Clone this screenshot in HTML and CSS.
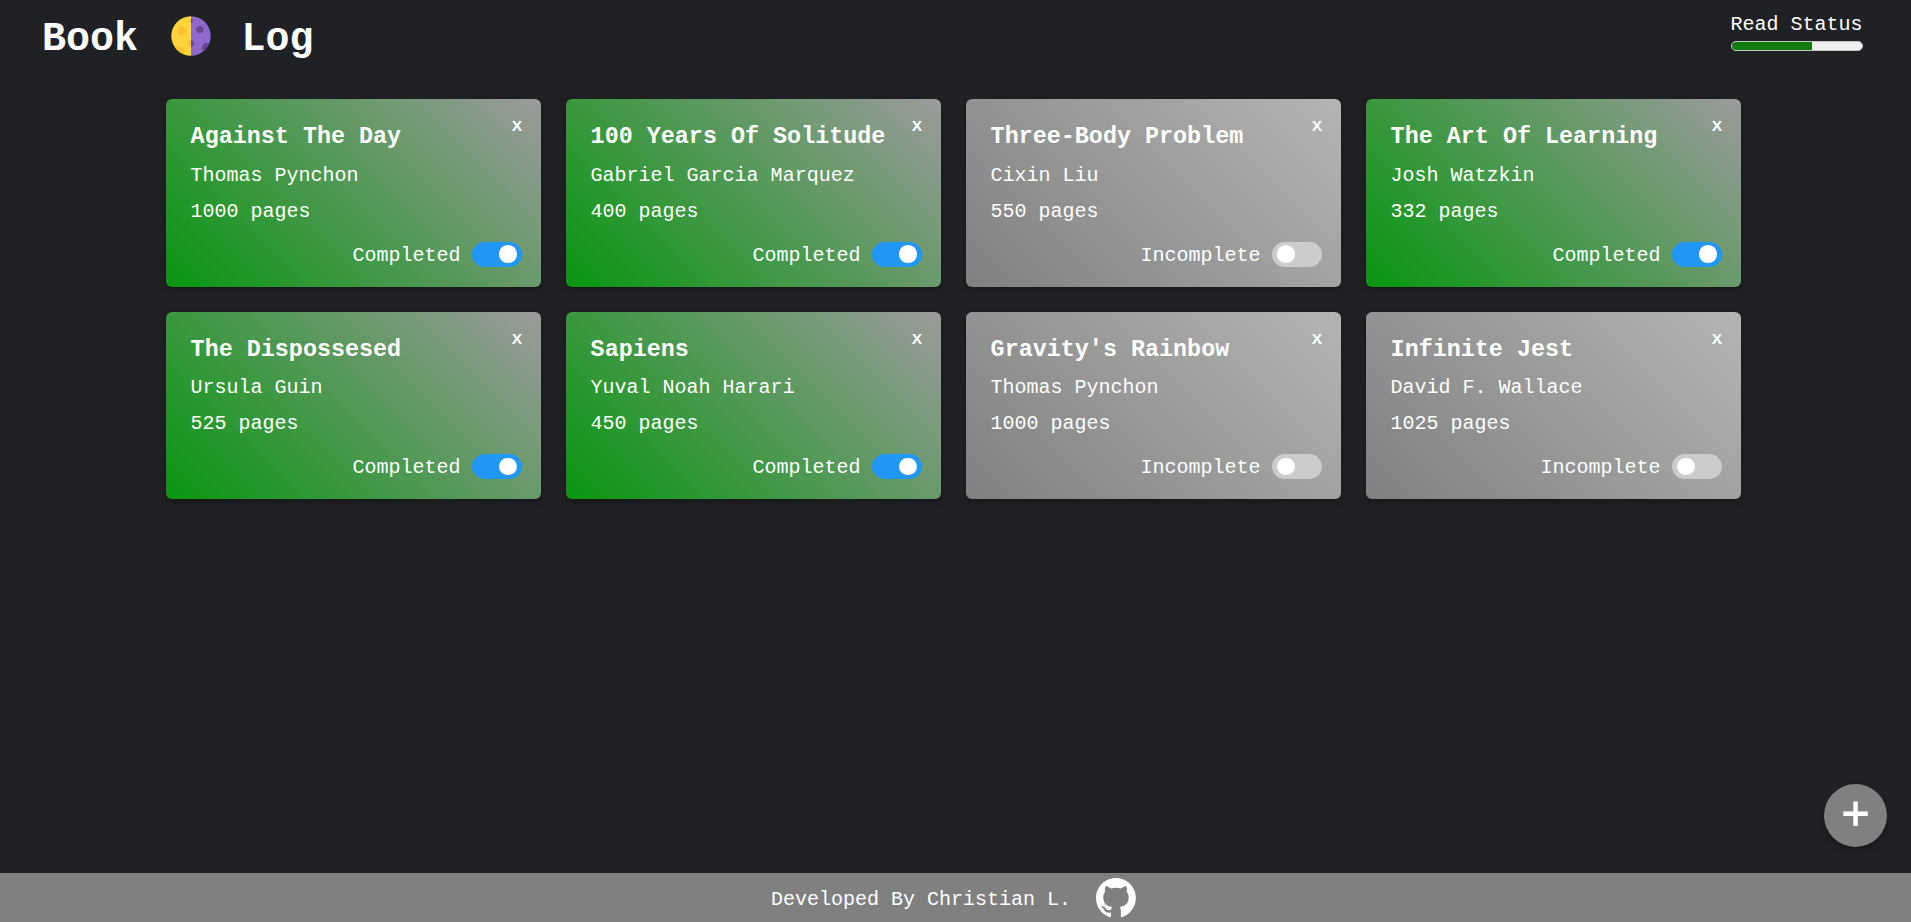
FILE: index.html
```
<!DOCTYPE html>
<html lang="en">
<head>
<meta charset="utf-8">
<title>Book Log</title>
<link rel="stylesheet" href="styles.css">
</head>
<body>
<header class="header">
  <h1 class="logo"><span>Book</span>
    <svg class="moon" viewBox="0 0 40 40">
      <defs><clipPath id="disc"><circle cx="20" cy="20" r="19.7"/></clipPath></defs>
      <g clip-path="url(#disc)">
        <rect width="20" height="40" fill="#ffd43f"/>
        <rect x="20" width="20" height="40" fill="#9268ca"/>
        <circle cx="10.700" cy="15" r="4.800" fill="#fbc034"/>
        <circle cx="8" cy="35" r="5" fill="#fbc034"/>
        <path d="M20 3a2 2 0 0 0 0 4zM20 24a3.500 3.500 0 0 0 0 7z" fill="#fbc034"/>
        <path d="M20 3a2 2 0 0 1 0 4zM20 24a3.600 3.600 0 0 1 0 7z" fill="#6b4390"/>
        <circle cx="28.800" cy="13.500" r="3.600" fill="#6b4390"/>
        <circle cx="36" cy="32" r="5" fill="#6b4390"/>
      </g>
    </svg>
    <span>Log</span></h1>
  <div class="status"><span>Read Status</span><div class="track"><div class="fill"></div></div></div>
</header>
<main class="grid">
  <article class="card done"><button class="close">X</button><h3>Against The Day</h3><p>Thomas Pynchon</p><p>1000 pages</p><div class="state"><span>Completed</span><i class="toggle"></i></div></article>
  <article class="card done"><button class="close">X</button><h3>100 Years Of Solitude</h3><p>Gabriel Garcia Marquez</p><p>400 pages</p><div class="state"><span>Completed</span><i class="toggle"></i></div></article>
  <article class="card"><button class="close">X</button><h3>Three-Body Problem</h3><p>Cixin Liu</p><p>550 pages</p><div class="state"><span>Incomplete</span><i class="toggle"></i></div></article>
  <article class="card done"><button class="close">X</button><h3>The Art Of Learning</h3><p>Josh Watzkin</p><p>332 pages</p><div class="state"><span>Completed</span><i class="toggle"></i></div></article>
  <article class="card done"><button class="close">X</button><h3>The Dispossesed</h3><p>Ursula Guin</p><p>525 pages</p><div class="state"><span>Completed</span><i class="toggle"></i></div></article>
  <article class="card done"><button class="close">X</button><h3>Sapiens</h3><p>Yuval Noah Harari</p><p>450 pages</p><div class="state"><span>Completed</span><i class="toggle"></i></div></article>
  <article class="card"><button class="close">X</button><h3>Gravity's Rainbow</h3><p>Thomas Pynchon</p><p>1000 pages</p><div class="state"><span>Incomplete</span><i class="toggle"></i></div></article>
  <article class="card"><button class="close">X</button><h3>Infinite Jest</h3><p>David F. Wallace</p><p>1025 pages</p><div class="state"><span>Incomplete</span><i class="toggle"></i></div></article>
</main>
<button class="add">+</button>
<footer class="footer"><span>Developed By Christian L.</span>
  <svg class="github" viewBox="0 0 98 98"><path fill="#fff" d="M48.854 0C21.839 0 0 22 0 49.217c0 21.756 13.993 40.172 33.405 46.690 2.427.490 3.316-1.059 3.316-2.362 0-1.141-.080-5.052-.080-9.127-13.590 2.934-16.420-5.867-16.420-5.867-2.184-5.704-5.420-7.170-5.420-7.170-4.448-3.015.324-3.015.324-3.015 4.934.326 7.523 5.052 7.523 5.052 4.367 7.496 11.404 5.378 14.235 4.074.404-3.178 1.699-5.378 3.074-6.600-10.839-1.141-22.243-5.378-22.243-24.283 0-5.378 1.940-9.778 5.014-13.200-.485-1.222-2.184-6.275.486-13.038 0 0 4.125-1.304 13.426 5.052a46.970 46.970 0 0 1 12.214-1.630c4.125 0 8.330.571 12.213 1.630 9.302-6.356 13.427-5.052 13.427-5.052 2.670 6.763.970 11.816.485 13.038 3.155 3.422 5.015 7.822 5.015 13.200 0 18.905-11.404 23.060-22.324 24.283 1.780 1.548 3.316 4.481 3.316 9.126 0 6.600-.080 11.897-.080 13.526 0 1.304.890 2.853 3.316 2.364 19.412-6.520 33.405-24.935 33.405-46.691C97.707 22 75.788 0 48.854 0z"/></svg>
</footer>
</body>
</html>
```
FILE: styles.css
```
* { box-sizing: border-box; margin: 0; padding: 0; }
body {
  height: 922px;
  display: flex;
  flex-direction: column;
  overflow: hidden;
  background: #202124;
  color: #fff;
  font: 20px/22px "Courier New", "Liberation Mono", monospace;
}
.header { height: 99.2px; display: flex; justify-content: space-between; padding: 0 48px 0 42px; }
.logo { display: flex; height: 45px; margin-top: 16px; font-size: 40px; line-height: 47px; }
.moon { width: 40px; height: 40px; margin: 0 31px 0 32.6px; }
.status { width: 132.500px; padding-top: 14px; }
.status span { display: block; white-space: nowrap; }
.track { height: 10px; margin-top: 5px; border: 1px solid #c4c4c4; border-radius: 5px; background: #efefef; overflow: hidden; }
.fill { width: 62%; height: 8px; background: #107c10; }
.grid { flex: 1; display: grid; grid-template-columns: repeat(4, 375px); grid-auto-rows: 187.600px; gap: 25px; padding-left: 166px; }
.card {
  position: relative;
  padding: 25px 19px 0 24.6px;
  border-radius: 6px;
  background: linear-gradient(45deg, #808080, #b4b4b4);
  box-shadow: 0 3px 6px rgba(0, 0, 0, .3);
}
.card.done { background: linear-gradient(45deg, #089610, #9b9b9b); }
.card h3 { font-size: 23.400px; line-height: 26px; margin-bottom: 14.500px; white-space: nowrap; }
.card p { line-height: 22px; margin-bottom: 14px; }
.state { display: flex; justify-content: flex-end; gap: 11.5px; height: 25px; line-height: 27px; margin-top: 19px; }
.toggle { width: 50px; height: 25px; padding: 3.500px 5px; border-radius: 13px; background: #ccc; }
.toggle::before { content: ""; display: block; width: 17.500px; height: 17.500px; border-radius: 50%; background: #fff; }
.done .toggle { background: #2196f3; }
.done .toggle::before { margin-left: 22px; }
.close { position: absolute; top: 17px; right: 18px; width: 12px; border: 0; background: none; color: #fff; font: bold 15.500px/20px "Liberation Sans", sans-serif; }
.add {
  position: absolute;
  left: 1824px;
  top: 784px;
  width: 63px;
  height: 63px;
  border: 0;
  border-radius: 50%;
  background: #808080;
  color: #fff;
  font: 600 51px/52px "Open Sans", sans-serif;
  padding-bottom: 7px;
  box-shadow: 0 3px 6px rgba(0, 0, 0, .3);
}
.footer { height: 49px; display: flex; justify-content: center; align-items: center; background: #808080; gap: 25px; padding-right: 4px; }
.footer span { padding-top: 4px; }
.github { width: 40px; height: 40px; }
```
